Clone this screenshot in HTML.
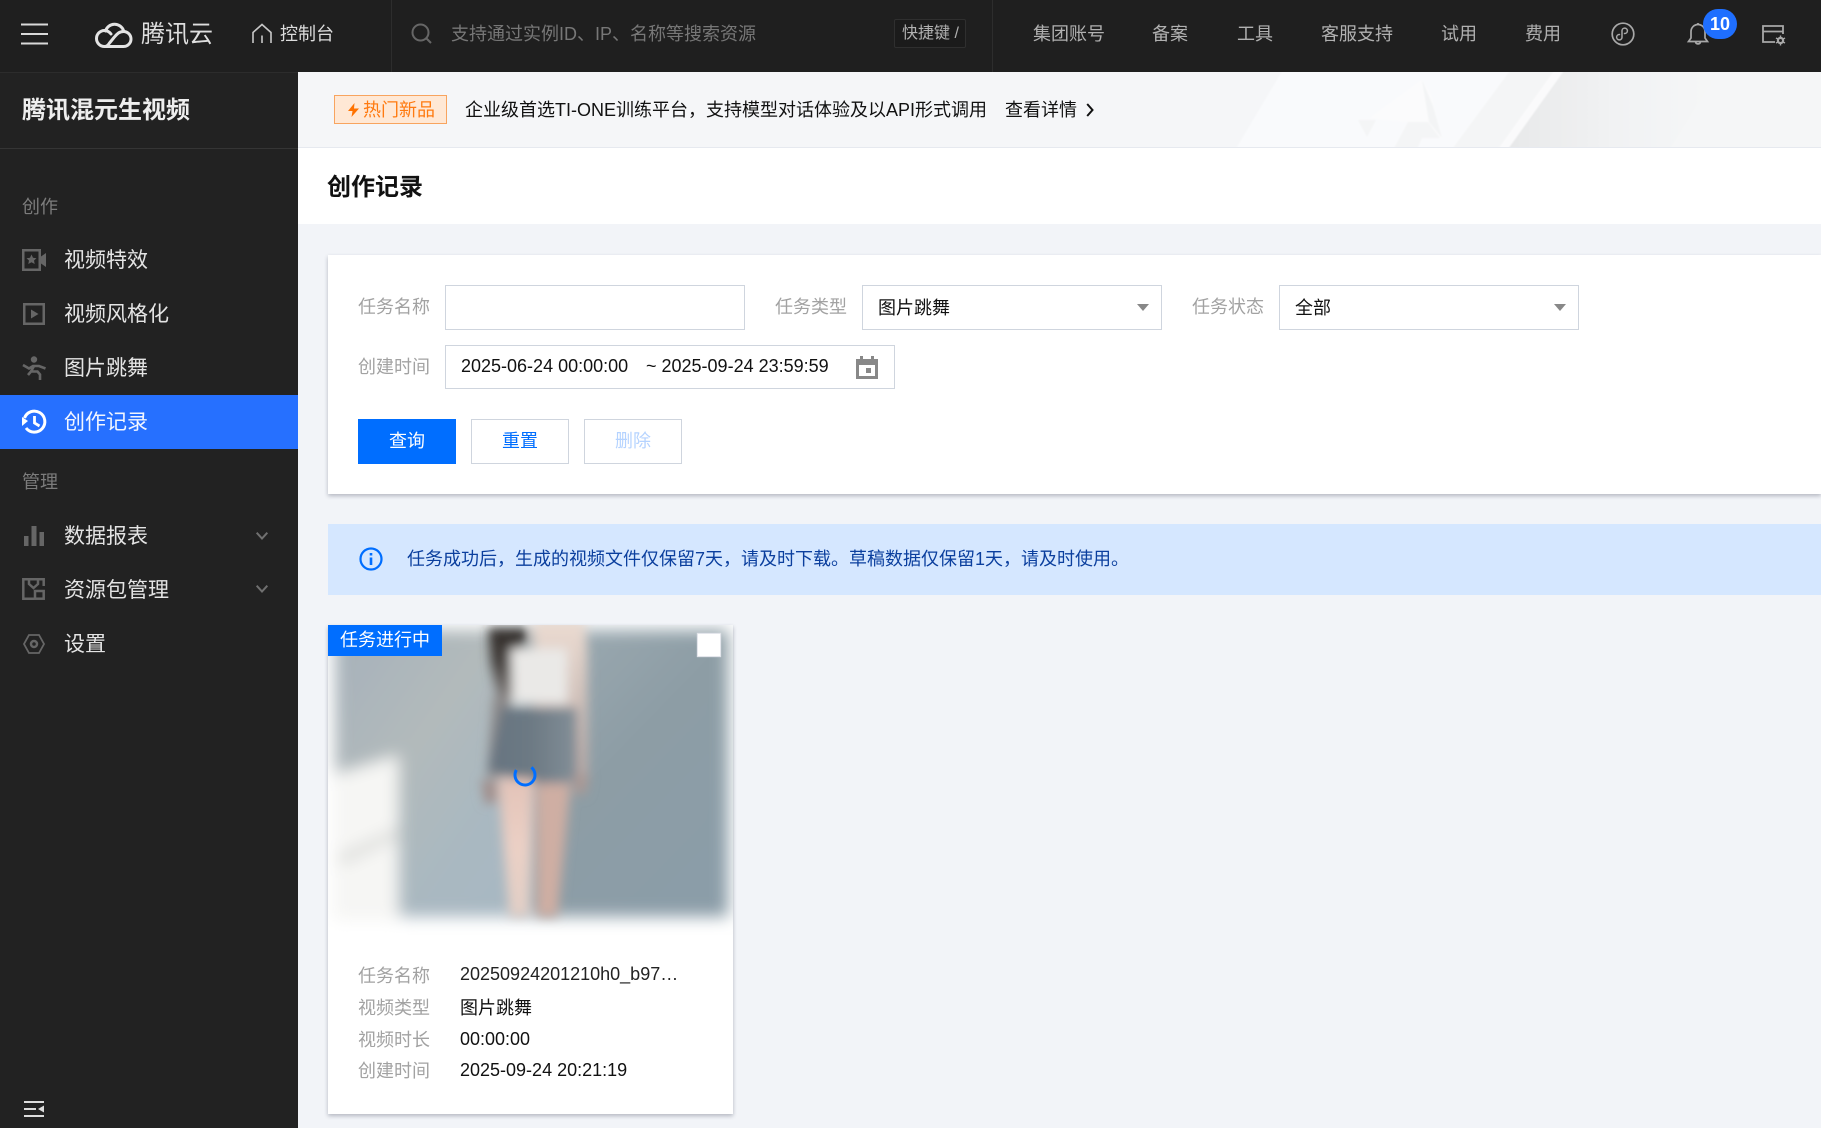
<!DOCTYPE html>
<html lang="zh-CN"><head><meta charset="utf-8"><title>创作记录</title>
<style>
*{box-sizing:border-box}
html,body{margin:0;padding:0;width:1821px;height:1128px;overflow:hidden;background:#f2f4f8}
body{font-family:"Liberation Sans","Noto Sans CJK SC",sans-serif;font-size:18px;color:#000;position:relative}
.a{position:absolute}
.t{position:absolute;white-space:nowrap;line-height:24px}
.nav{color:#b0b0b0;top:22px}
.side{color:#e4e4e4;font-size:21px;line-height:30px;left:64px}
.lab{color:#a2a2a2}
.box{position:absolute;background:#fff;border:1px solid #cfd5de}
.arrow{position:absolute;width:0;height:0;border-left:6px solid transparent;border-right:6px solid transparent;border-top:7px solid #888}
.btn{position:absolute;top:419px;height:45px;width:98px;text-align:center;line-height:43px;background:#fff;border:1px solid #cfd5de;color:#006eff}
svg{position:absolute;display:block;overflow:visible}
</style></head><body>
<!-- header -->
<div class="a" style="left:0;top:0;width:1821px;height:72px;background:#1f1f1f"></div>
<div class="a" style="left:391px;top:0;width:1px;height:72px;background:#2d2d2d"></div>
<div class="a" style="left:992px;top:0;width:1px;height:72px;background:#2d2d2d"></div>
<svg style="left:21px;top:23px" width="27" height="22"><path d="M0 1.500H27M0 11H27M0 20.500H27" stroke="#d9d9d9" stroke-width="2"/></svg>
<svg style="left:95px;top:20px" width="37" height="28" viewBox="0 0 37 28" fill="none" stroke="#e4e4e4" stroke-width="3" stroke-linecap="round"><path d="M10 26.500H28.500A7.500 7.500 0 0 0 28.500 11.500C24 11.500 22 14 19 17.500L14.500 23C13 25.500 11.500 26.500 9.500 26.500A8 8 0 0 1 9.500 10.500C11.500 10.500 14 11.500 16 14"/><path d="M10.500 11A9.500 9.500 0 0 1 28.500 10.500"/></svg>
<div class="t" style="left:141px;top:20px;font-size:24px;line-height:30px;color:#dedede">腾讯云</div>
<svg style="left:251px;top:23px" width="22" height="21" viewBox="0 0 22 21" fill="none" stroke="#c8c8c8" stroke-width="1.600"><path d="M2 20V9.500L11 1.500L20 9.500V20M11 12.500V20"/></svg>
<div class="t" style="left:280px;top:22px;color:#dcdcdc">控制台</div>
<svg style="left:411px;top:23px" width="21" height="21" viewBox="0 0 21 21" fill="none" stroke="#666" stroke-width="2"><circle cx="9.500" cy="9.500" r="8"/><path d="M15 15L20 20"/></svg>
<div class="t" style="left:451px;top:22px;color:#777">支持通过实例ID、IP、名称等搜索资源</div>
<div class="a" style="left:894px;top:19px;width:72px;height:29px;border:1px solid #2f2f2f;border-radius:2px;background:#1b1b1b"></div>
<div class="t" style="left:902px;top:22px;font-size:16px;color:#b0b0b0">快捷键 /</div>
<div class="t nav" style="left:1033px">集团账号</div>
<div class="t nav" style="left:1152px">备案</div>
<div class="t nav" style="left:1237px">工具</div>
<div class="t nav" style="left:1321px">客服支持</div>
<div class="t nav" style="left:1441px">试用</div>
<div class="t nav" style="left:1525px">费用</div>
<svg style="left:1611px;top:22px" width="24" height="24" viewBox="0 0 24 24" fill="none" stroke="#a8a8a8" stroke-width="1.700"><circle cx="12" cy="12" r="10.800"/><path d="M8.500 12.500a2.700 2.700 0 1 0 2.500 3V8.500a2.700 2.700 0 1 1 2.500 3" stroke-linecap="round" stroke-width="1.500"/></svg>
<svg style="left:1687px;top:22px" width="22" height="24" viewBox="0 0 22 24" fill="none" stroke="#a8a8a8" stroke-width="1.700"><path d="M1.500 19.500H20.500L18 16V9.500A7 7 0 0 0 4 9.500V16Z"/><path d="M8.500 20a2.600 2.600 0 0 0 5 0"/><path d="M11 1V3"/></svg>
<div class="a" style="left:1703px;top:9px;width:34px;height:30px;border-radius:15px;background:#1f6fff;color:#fff;font-weight:bold;font-size:18px;line-height:30px;text-align:center">10</div>
<svg style="left:1762px;top:25px" width="24" height="21" viewBox="0 0 24 21" fill="none" stroke="#a8a8a8" stroke-width="1.800"><path d="M13 17H1V1H21V9M1 6.500H21"/><circle cx="18.500" cy="15.500" r="2.600" stroke-width="2.200"/><path d="M18.500 10.500V12.500M18.500 18.500V20.500M14 13L15.800 14M21.200 17L23 18M14 18L15.800 17M21.200 14L23 13" stroke-width="1.400"/></svg>

<!-- sidebar -->
<div class="a" style="left:0;top:72px;width:298px;height:1056px;background:#222;border-top:1px solid #2c2c2c"></div>
<div class="a" style="left:0;top:148px;width:298px;height:1px;background:#353535"></div>
<div class="t" style="left:22px;top:96px;font-size:24px;line-height:30px;font-weight:bold;color:#eee">腾讯混元生视频</div>
<div class="t" style="left:22px;top:195px;color:#7c7c7c">创作</div>
<svg style="left:22px;top:249px" width="24" height="22" viewBox="0 0 24 22" fill="#666"><path d="M0 0H19V7.500L24 4V18L19 14.500V22H0ZM2.500 2.500V19.500H16.500V2.500Z" fill-rule="evenodd"/><path d="M9.500 5.500L11 8.800L14.500 9.200L12 11.500L12.700 15L9.500 13.200L6.300 15L7 11.500L4.500 9.200L8 8.800Z"/></svg>
<div class="t side" style="top:246px">视频特效</div>
<svg style="left:23px;top:303px" width="22" height="22" viewBox="0 0 22 22" fill="#666"><path d="M0 0H22V22H0ZM2.500 2.500V19.500H19.500V2.500Z" fill-rule="evenodd"/><path d="M8 6.500L15.500 11L8 15.500Z"/></svg>
<div class="t side" style="top:300px">视频风格化</div>
<svg style="left:22px;top:356px" width="24" height="24" viewBox="0 0 24 24" fill="none" stroke="#666" stroke-width="2.600"><circle cx="12" cy="3.500" r="3.200" fill="#666" stroke="none"/><path d="M1 9L7 12.500L11 10H17L23.500 12.500M12 10L9 15.500H15.500L18 18.500V24M9 15.500L6 19"/></svg>
<div class="t side" style="top:354px">图片跳舞</div>
<div class="a" style="left:0;top:395px;width:298px;height:54px;background:#2670ff"></div>
<svg style="left:22px;top:410px" width="24" height="24" viewBox="0 0 24 24" fill="none" stroke="#fff" stroke-width="3"><path d="M4 18A10.500 10.500 0 1 0 2.500 8"/><path d="M0 7L6 11L0 16Z" fill="#fff" stroke="none"/><path d="M12.500 6V13L17.500 16" stroke-width="2.800"/></svg>
<div class="t side" style="top:408px;color:#f2f6ff">创作记录</div>
<div class="t" style="left:22px;top:470px;color:#7c7c7c">管理</div>
<svg style="left:24px;top:526px" width="20" height="20" fill="#666"><rect x="0" y="10" width="4.500" height="10"/><rect x="7.500" y="0" width="5" height="20"/><rect x="15.500" y="6" width="4.500" height="14"/></svg>
<div class="t side" style="top:522px">数据报表</div>
<svg style="left:256px;top:532px" width="12" height="8" fill="none" stroke="#707070" stroke-width="2"><path d="M0.700 0.700L6 6.500L11.300 0.700"/></svg>
<svg style="left:22px;top:578px" width="23" height="22" viewBox="0 0 23 22" fill="none" stroke="#666" stroke-width="2.500"><path d="M12 20.700H1.300V1.300H21.700V8"/><path d="M7 2V6L11.500 10L16 6V2"/><rect x="13" y="13" width="8.700" height="7.700"/></svg>
<div class="t side" style="top:576px">资源包管理</div>
<svg style="left:256px;top:585px" width="12" height="8" fill="none" stroke="#707070" stroke-width="2"><path d="M0.700 0.700L6 6.500L11.300 0.700"/></svg>
<svg style="left:23px;top:634px" width="22" height="20" viewBox="0 0 22 20" fill="none" stroke="#666" stroke-width="1.800"><path d="M6 1H16L21 10L16 19H6L1 10Z"/><circle cx="11" cy="10" r="3" stroke-width="2.500"/></svg>
<div class="t side" style="top:630px">设置</div>
<svg style="left:24px;top:1101px" width="20" height="16" fill="#ddd"><rect x="0" y="0" width="20" height="2"/><rect x="0" y="7" width="12" height="2"/><rect x="0" y="14" width="20" height="2"/><path d="M14 8L20 4.500V11.500Z"/></svg>

<!-- banner -->
<div class="a" style="left:298px;top:72px;width:1523px;height:76px;background:#f5f6f8;border-bottom:1px solid #e6e9ef;overflow:hidden">
<svg style="left:0;top:0" width="1523" height="75" viewBox="298 72 1523 75">
<defs><linearGradient id="g1" x1="0" x2="1" y1="0" y2="0"><stop offset="0" stop-color="#e7e8e9"/><stop offset=".5" stop-color="#f1f2f3"/><stop offset="1" stop-color="#f5f6f7"/></linearGradient>
<filter id="bb"><feGaussianBlur stdDeviation=".8"/></filter></defs>
<g filter="url(#bb)">
<polygon points="1284,68 1512,68 1455,152 1234,152" fill="#f9fafc"/>
<polygon points="1512,68 1566,68 1506,152 1450,152" fill="#f4f5f6"/>
<polygon points="1556,68 1566,68 1506,152 1496,152" fill="#fafafb"/>
<polygon points="1566,68 1720,68 1670,152 1506,152" fill="url(#g1)"/>
<polygon points="1720,68 1825,68 1825,152 1668,152" fill="#f5f6f7"/>
<polygon points="1370,118 1422,80 1431,95 1442,138 1422,138 1416,152 1392,152 1408,122" fill="#fbfbfc"/>
<polygon points="1422,80 1433,106 1442,138 1429,122" fill="#f3f4f5"/>
<polygon points="1408,122 1428,122 1440,138 1422,138 1416,152 1392,152" fill="#f4f5f6"/>
<polygon points="1358,120 1376,120 1367,137" fill="#f4f5f6"/>
</g></svg></div>
<div class="a" style="left:334px;top:95px;width:113px;height:29px;background:#ffe8d5;border:1px solid #f8a45f"></div>
<svg style="left:348px;top:103px" width="11" height="14" viewBox="0 0 11 14" fill="#ff7200"><path d="M6.500 0L0 8H4.500L3.500 14L11 5.500H6Z"/></svg>
<div class="t" style="left:363px;top:98px;color:#ff7a10">热门新品</div>
<div class="t" style="left:465px;top:98px;color:#111">企业级首选TI-ONE训练平台，支持模型对话体验及以API形式调用</div>
<div class="t" style="left:1005px;top:98px;color:#111">查看详情</div>
<svg style="left:1086px;top:103px" width="8" height="14" fill="none" stroke="#111" stroke-width="2"><path d="M1.200 1L6.500 7L1.200 13"/></svg>

<!-- title -->
<div class="a" style="left:298px;top:148px;width:1523px;height:76px;background:#fff"></div>
<div class="t" style="left:327px;top:173px;font-size:24px;line-height:30px;font-weight:bold;color:#111">创作记录</div>

<!-- filter card -->
<div class="a" style="left:328px;top:255px;width:1493px;height:239px;background:#fff;box-shadow:0 2px 4px rgba(54,58,80,.32)"></div>
<div class="t lab" style="left:358px;top:295px">任务名称</div>
<div class="box" style="left:445px;top:285px;width:300px;height:45px"></div>
<div class="t lab" style="left:775px;top:295px">任务类型</div>
<div class="box" style="left:862px;top:285px;width:300px;height:45px"></div>
<div class="t" style="left:878px;top:296px;color:#111">图片跳舞</div>
<div class="arrow" style="left:1137px;top:304px"></div>
<div class="t lab" style="left:1192px;top:295px">任务状态</div>
<div class="box" style="left:1279px;top:285px;width:300px;height:45px"></div>
<div class="t" style="left:1295px;top:296px;color:#111">全部</div>
<div class="arrow" style="left:1554px;top:304px"></div>
<div class="t lab" style="left:358px;top:355px">创建时间</div>
<div class="box" style="left:445px;top:345px;width:450px;height:44px"></div>
<div class="t" style="left:461px;top:354px;color:#111">2025-06-24 00:00:00</div>
<div class="t" style="left:646px;top:354px;color:#111">~ 2025-09-24 23:59:59</div>
<svg style="left:856px;top:356px" width="22" height="23" viewBox="0 0 22 23" fill="#888"><path d="M0 3H4V0H7V3H15V0H18V3H22V23H0ZM3 9V20H19V9Z" fill-rule="evenodd"/><rect x="10" y="12" width="5" height="5"/></svg>
<div class="btn" style="left:358px;background:#006eff;border-color:#006eff;color:#fff">查询</div>
<div class="btn" style="left:471px">重置</div>
<div class="btn" style="left:584px;color:#b5d3ff">删除</div>

<!-- alert -->
<div class="a" style="left:328px;top:524px;width:1493px;height:71px;background:#d5e7ff"></div>
<svg style="left:359px;top:547px" width="24" height="24" viewBox="0 0 24 24" fill="none" stroke="#006eff" stroke-width="2.200"><circle cx="12" cy="12" r="10.500"/><path d="M12 10.500V18" stroke-width="2.600"/><path d="M12 6V8.500" stroke-width="2.600"/></svg>
<div class="t" style="left:407px;top:547px;color:#0b3f9e">任务成功后，生成的视频文件仅保留7天，请及时下载。草稿数据仅保留1天，请及时使用。</div>

<!-- card -->
<div class="a" style="left:328px;top:625px;width:405px;height:489px;background:#fff;box-shadow:0 2px 4px rgba(54,58,80,.32);overflow:hidden"></div>
<svg style="left:320px;top:620px" width="420" height="330" viewBox="0 0 1260 990">
<defs>
<clipPath id="cc"><rect x="24" y="15" width="1216" height="975"/></clipPath>
<filter id="bl" x="-5%" y="-5%" width="110%" height="110%"><feGaussianBlur stdDeviation="24"/></filter>
<filter id="b2" x="-30%" y="-30%" width="160%" height="160%"><feGaussianBlur stdDeviation="17"/></filter>
<linearGradient id="bgL" x1="0" y1="0" x2="1" y2="1"><stop offset="0" stop-color="#a6b1ba"/><stop offset=".4" stop-color="#b2babb"/><stop offset=".7" stop-color="#a9b8c1"/><stop offset="1" stop-color="#a8b8c2"/></linearGradient>
<linearGradient id="bgR" x1="0" y1="0" x2=".7" y2="1"><stop offset="0" stop-color="#9dabb2"/><stop offset=".5" stop-color="#8d9da5"/><stop offset="1" stop-color="#8b9da8"/></linearGradient>
<linearGradient id="sh" x1="0" y1="0" x2="1" y2="0"><stop offset="0" stop-color="#667480"/><stop offset=".5" stop-color="#6d7a84"/><stop offset="1" stop-color="#838f98"/></linearGradient>
<linearGradient id="leg" x1="0" y1="0" x2="0" y2="1"><stop offset="0" stop-color="#e3c3b8"/><stop offset=".5" stop-color="#ebd0c5"/><stop offset="1" stop-color="#e2cfc6"/></linearGradient>
<linearGradient id="hair" x1="0" y1="0" x2="0" y2="1"><stop offset="0" stop-color="#302b28"/><stop offset=".45" stop-color="#45403d"/><stop offset="1" stop-color="#8f8b8a"/></linearGradient>
<linearGradient id="arm" x1="0" y1="0" x2="0" y2="1"><stop offset="0" stop-color="#ecdcd2"/><stop offset=".5" stop-color="#d0c0b9"/><stop offset="1" stop-color="#b9a6a1"/></linearGradient>
</defs>
<g clip-path="url(#cc)"><g filter="url(#bl)">
<rect x="45" y="30" width="600" height="860" fill="url(#bgL)"/>
<rect x="640" y="30" width="585" height="860" fill="url(#bgR)"/>
<path d="M40 465L235 405V900H40Z" fill="#f6f6f4"/>
<path d="M60 705L235 625V650L60 735Z" fill="#d6d7d4"/>
</g><g filter="url(#b2)">
<path d="M640 0H795L802 90V500L775 505L745 280H640Z" fill="url(#arm)"/>
<path d="M505 25H625L605 130L570 245L535 250L512 130Z" fill="url(#hair)"/>
<path d="M520 230H570L555 470H500Z" fill="#8c8888"/>
<path d="M572 85H742V250H578Z" fill="#eae9e7"/>
<path d="M545 262H772L772 485L640 490L505 450Z" fill="url(#sh)"/>
<path d="M483 480H530V550H495Z" fill="#a08d8a"/>
<path d="M758 465H808L795 525H768Z" fill="#ac9994"/>
<path d="M535 475H640L628 890H568Z" fill="url(#leg)"/>
<path d="M650 490H752L712 890H650Z" fill="#cfaea3"/>
</g></g>
<rect x="1132" y="40" width="70" height="70" fill="#fff" stroke="#dfe2e8" stroke-width="3"/>
<circle cx="615" cy="465" r="30" fill="none" stroke="#006eff" stroke-width="9" stroke-dasharray="135 53" transform="rotate(-50 615 465)"/>
</svg>
<div class="a" style="left:328px;top:625px;width:114px;height:31px;background:#006eff"></div>
<div class="t" style="left:340px;top:628px;color:#fff">任务进行中</div>
<div class="t lab" style="left:358px;top:964px">任务名称</div>
<div class="t" style="left:460px;top:962px;color:#222">20250924201210h0_b97…</div>
<div class="t lab" style="left:358px;top:996px">视频类型</div>
<div class="t" style="left:460px;top:996px;color:#111">图片跳舞</div>
<div class="t lab" style="left:358px;top:1028px">视频时长</div>
<div class="t" style="left:460px;top:1027px;color:#111">00:00:00</div>
<div class="t lab" style="left:358px;top:1059px">创建时间</div>
<div class="t" style="left:460px;top:1058px;color:#111">2025-09-24 20:21:19</div>
</body></html>
